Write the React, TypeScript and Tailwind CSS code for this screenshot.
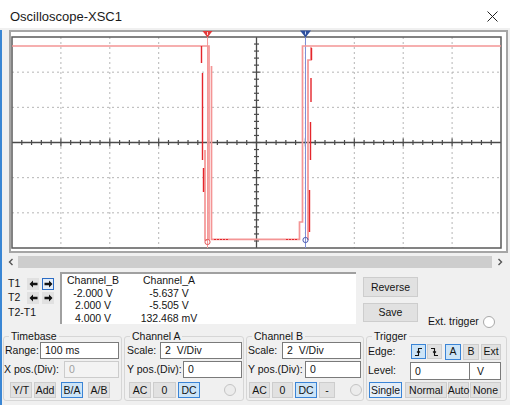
import type { ReactNode } from "react";

const GX0 = 12;
const GY0 = 37;
const GW = 489;
const GH = 211;
const DX = GW / 10;
const DY = GH / 6;
const CX = GX0 + 5 * DX;
const CY = GY0 + 3 * DY;

function Screen() {
  const vLines = [1, 2, 3, 4, 6, 7, 8, 9].map((i) => GX0 + i * DX);
  const hLines = [1, 2, 4, 5].map((j) => GY0 + j * DY);
  const vTicks = Array.from({ length: 29 }, (_, k) => k + 1);
  const hTicks = Array.from({ length: 49 }, (_, k) => k + 1);

  return (
    <svg width={499} height={223} viewBox="9 30 499 223" className="block">
      <rect x={10} y={31} width={497} height={221} fill="#fff" stroke="#a5a5a5" strokeWidth={2} />

      {/* grid */}
      {vLines.map((x) => (
        <line key={`v${x}`} x1={x} y1={GY0} x2={x} y2={GY0 + GH} stroke="#b5b5b5" strokeWidth={1} strokeDasharray="2 3" />
      ))}
      {hLines.map((y) => (
        <line key={`h${y}`} x1={GX0} y1={y} x2={GX0 + GW} y2={y} stroke="#b5b5b5" strokeWidth={1} strokeDasharray="2 3" />
      ))}
      <line x1={CX} y1={GY0} x2={CX} y2={GY0 + GH} stroke="#4a4a4a" strokeWidth={1.3} />
      <line x1={GX0} y1={CY} x2={GX0 + GW} y2={CY} stroke="#4a4a4a" strokeWidth={1.3} />
      {vTicks.map((k) => {
        const y = GY0 + (k * DY) / 5;
        const l = k % 5 === 0 ? 4 : 2.5;
        return <line key={`vt${k}`} x1={CX - l} y1={y} x2={CX + l} y2={y} stroke="#4a4a4a" strokeWidth={1.2} />;
      })}
      {hTicks.map((k) => {
        const x = GX0 + (k * DX) / 5;
        const l = k % 5 === 0 ? 4 : 2.5;
        return <line key={`ht${k}`} x1={x} y1={CY - l} x2={x} y2={CY + l} stroke="#4a4a4a" strokeWidth={1.2} />;
      })}
      <rect x={GX0} y={GY0} width={GW} height={GH} fill="none" stroke="#5a5a5a" strokeWidth={1.5} />

      {/* cursors */}
      <line x1={207.5} y1={GY0} x2={207.5} y2={GY0 + GH} stroke="#f29a9a" strokeWidth={1} />
      <line x1={305.5} y1={GY0} x2={305.5} y2={GY0 + GH} stroke="#7f8fd6" strokeWidth={1} />

      {/* traces */}
      <g fill="none" stroke="#f49595" strokeWidth={1.7}>
        <path d="M12 46 H209 V240" />
        <path d="M205 150 V240 H208" />
        <path d="M211.5 66 V239.3 H299.5 V222 H302.5 V46 H501" />
        <path d="M308 240 V60 H311 V47" />
      </g>
      <g fill="none" stroke="#e4262c" strokeWidth={1.4}>
        <path d="M201.5 46 V63 M202.5 73 V160 M203.5 168 V192" />
        <path d="M311.5 48 V60 M311 78 V102 M310.5 122 V160 M309.5 190 V232" />
        <path d="M214 239.5 H228 M286 239.5 H298" strokeWidth={1} strokeDasharray="2 1" />
      </g>

      {/* cursor markers */}
      <polygon points="202.5,31 212.5,31 207.5,37.5" fill="#e23a3a" />
      <line x1={207.5} y1={32} x2={207.5} y2={35} stroke="#ffd0d0" strokeWidth={1} />
      <polygon points="300,30.5 311,30.5 305.5,37.5" fill="#2d4f9e" />
      <line x1={305.5} y1={31.5} x2={305.5} y2={34.5} stroke="#c9d4f2" strokeWidth={1} />
      <circle cx={207.5} cy={242} r={2.6} fill="none" stroke="#e25a5a" strokeWidth={1} />
      <circle cx={305.5} cy={240} r={2.6} fill="none" stroke="#4b5cb2" strokeWidth={1} />
    </svg>
  );
}

function Chevron({ dir }: { dir: "l" | "r" }) {
  return (
    <svg width={6} height={8} viewBox="0 0 6 8">
      <path d={dir === "l" ? "M4.5 1 L1.5 4 L4.5 7" : "M1.5 1 L4.5 4 L1.5 7"} fill="none" stroke="#555" strokeWidth={1.4} />
    </svg>
  );
}

function Arrow({ dir }: { dir: "l" | "r" }) {
  return (
    <svg width={9} height={8} viewBox="0 0 9 8">
      <path
        d={dir === "l" ? "M0.5 4 L4 0.5 V2.8 H8.5 V5.2 H4 V7.5 Z" : "M8.5 4 L5 0.5 V2.8 H0.5 V5.2 H5 V7.5 Z"}
        fill="#111"
      />
    </svg>
  );
}

function Edge({ rising }: { rising: boolean }) {
  return (
    <svg width={9} height={10} viewBox="0 0 9 10">
      <path d={rising ? "M1 8.5 H4.5 V1.5 H8" : "M1 1.5 H4.5 V8.5 H8"} fill="none" stroke="#111" strokeWidth={1.1} />
      <path d={rising ? "M3 5.5 L4.5 4 L6 5.5" : "M3 4.5 L4.5 6 L6 4.5"} fill="none" stroke="#111" strokeWidth={1.1} />
    </svg>
  );
}

function Btn({ children, className, sel }: { children: ReactNode; className: string; sel?: boolean }) {
  return (
    <div
      className={`h-full flex items-center justify-center border leading-none ${
        sel ? "bg-[#cce4f7] border-[#3a84d6]" : "bg-[#e1e1e1] border-[#cdcdcd]"
      } ${className}`}
    >
      {children}
    </div>
  );
}

function Field({ children, className, disabled }: { children: ReactNode; className: string; disabled?: boolean }) {
  return (
    <div
      className={`h-full flex items-center pl-[4px] border leading-none ${
        disabled ? "bg-[#f3f3f3] border-[#cccccc] text-[#a0a0a0]" : "bg-white border-[#7a7a7a]"
      } ${className}`}
    >
      {children}
    </div>
  );
}

function Radio({ className }: { className: string }) {
  return <div className={`w-[12px] h-[12px] rounded-full border border-[#c4c4c4] bg-[#ececec] ${className}`} />;
}

function Group({ title, className, children }: { title: string; className: string; children: ReactNode }) {
  return (
    <fieldset className={`border border-[#d6d6d6] rounded-[3px] pb-[2px] ${className}`}>
      <legend className="ml-[5px] px-[2px] leading-[12px]">{title}</legend>
      {children}
    </fieldset>
  );
}

export default function App() {
  return (
    <div className="w-[510px] h-[405px] overflow-hidden bg-[#f0f0f0] font-['Liberation_Sans',Arial,sans-serif] text-[10.5px] text-[#141414]">
      {/* title bar */}
      <div className="h-[28px] bg-white flex items-center justify-between pt-[5px] pl-[10px] pr-[12px]">
        <span className="text-[13px] text-[#1a1a1a]">Oscilloscope-XSC1</span>
        <svg width={11} height={11} viewBox="0 0 11 11">
          <path d="M0.5 0.5 L10.5 10.5 M10.5 0.5 L0.5 10.5" stroke="#222" strokeWidth={1} />
        </svg>
      </div>

      <div className="h-[377px] border-l-2 border-b-2 border-[#3a86d4]">
        <div className="ml-[7px] mt-[2px] w-[499px] h-[223px]">
          <Screen />
        </div>

        {/* scrollbar */}
        <div className="ml-[1px] mt-[3px] w-[504px] h-[12px] flex">
          <div className="w-[15px] flex items-center justify-center">
            <Chevron dir="l" />
          </div>
          <div className="w-[474px] h-full bg-[#cdcdcd]" />
          <div className="w-[15px] flex items-center justify-center">
            <Chevron dir="r" />
          </div>
        </div>

        {/* measurements */}
        <div className="mt-[4px] h-[56px] flex pl-[3px]">
          <div className="pl-[3px] pt-[6px]">
            <div className="h-[12px] flex items-center">
              <span className="w-[19px]">T1</span>
              <div className="w-[12px] h-[12px] flex items-center justify-center bg-[#e1e1e1]">
                <Arrow dir="l" />
              </div>
              <div className="ml-[3px] w-[12px] h-[12px] flex items-center justify-center bg-[#e6eef8] border border-[#2c6cc4]">
                <Arrow dir="r" />
              </div>
            </div>
            <div className="mt-[2px] h-[12px] flex items-center">
              <span className="w-[19px]">T2</span>
              <div className="w-[12px] h-[12px] flex items-center justify-center bg-[#e1e1e1]">
                <Arrow dir="l" />
              </div>
              <div className="ml-[3px] w-[12px] h-[12px] flex items-center justify-center bg-[#e1e1e1]">
                <Arrow dir="r" />
              </div>
            </div>
            <div className="mt-[3px] h-[12px] flex items-center">T2-T1</div>
          </div>

          <div className="ml-[6px] w-[296px] h-[52px] bg-white border-t-2 border-l-2 border-[#a0a0a0] flex leading-[12.6px]">
            <div className="ml-[1px] w-[60px] flex flex-col items-center">
              <span>Channel_B</span>
              <span>-2.000 V</span>
              <span>2.000 V</span>
              <span>4.000 V</span>
            </div>
            <div className="ml-[16px] w-[60px] flex flex-col items-center">
              <span>Channel_A</span>
              <span>-5.637 V</span>
              <span>-5.505 V</span>
              <span className="whitespace-nowrap">132.468 mV</span>
            </div>
          </div>

          <div className="ml-[7px] w-[55px] flex flex-col">
            <Btn className="mt-[5px] !h-[20px] w-[55px]">Reverse</Btn>
            <Btn className="mt-[6px] !h-[19px] w-[55px]">Save</Btn>
          </div>

          <div className="ml-[10px] mt-[44px] h-[12px] flex items-center">
            <span>Ext. trigger</span>
            <div className="ml-[4px] w-[12px] h-[12px] rounded-full border border-[#a8a8a8] bg-white" />
          </div>
        </div>

        {/* control groups */}
        <div className="mt-[2px] flex pl-[1px] gap-[2px]">
          <Group title="Timebase" className="w-[119px]">
            <div className="h-[17px] flex items-center">
              <span className="w-[36px] pl-[1px]">Range:</span>
              <Field className="w-[79px]">100 ms</Field>
            </div>
            <div className="mt-[2px] h-[17px] flex items-center">
              <span className="w-[60px] whitespace-nowrap">X pos.(Div):</span>
              <Field className="w-[55px]" disabled>
                0
              </Field>
            </div>
            <div className="mt-[4px] h-[16px] flex items-center">
              <Btn className="ml-[6px] w-[22px]">Y/T</Btn>
              <Btn className="ml-[2px] w-[22px]">Add</Btn>
              <Btn className="ml-[5px] w-[22px]" sel>
                B/A
              </Btn>
              <Btn className="ml-[5px] w-[22px]">A/B</Btn>
            </div>
          </Group>

          <Group title="Channel A" className="w-[120px]">
            <div className="h-[17px] flex items-center">
              <span className="w-[35px] pl-[2px]">Scale:</span>
              <Field className="w-[82px]">2&nbsp;&nbsp;V/Div</Field>
            </div>
            <div className="mt-[2px] h-[17px] flex items-center">
              <span className="w-[58px] pl-[2px] whitespace-nowrap">Y pos.(Div):</span>
              <Field className="w-[59px]">0</Field>
            </div>
            <div className="mt-[4px] h-[16px] flex items-center">
              <Btn className="ml-[4px] w-[22px]">AC</Btn>
              <Btn className="ml-[2px] w-[23px]">0</Btn>
              <Btn className="ml-[2px] w-[22px]" sel>
                DC
              </Btn>
              <Radio className="ml-[24px]" />
            </div>
          </Group>

          <Group title="Channel B" className="w-[118px]">
            <div className="h-[17px] flex items-center">
              <span className="w-[35px] pl-[1px]">Scale:</span>
              <Field className="w-[79px]">2&nbsp;&nbsp;V/Div</Field>
            </div>
            <div className="mt-[2px] h-[17px] flex items-center">
              <span className="w-[58px] pl-[1px] whitespace-nowrap">Y pos.(Div):</span>
              <Field className="w-[56px]">0</Field>
            </div>
            <div className="mt-[4px] h-[16px] flex items-center">
              <Btn className="ml-[2px] w-[21px]">AC</Btn>
              <Btn className="ml-[2px] w-[21px]">0</Btn>
              <Btn className="ml-[2px] w-[22px]" sel>
                DC
              </Btn>
              <Btn className="ml-[2px] w-[16px]">-</Btn>
              <Radio className="ml-[15px]" />
            </div>
          </Group>

          <Group title="Trigger" className="w-[141px]">
            <div className="mt-[1px] h-[17px] flex items-center">
              <span className="w-[44px] pl-[1px]">Edge:</span>
              <Btn className="w-[15px] !h-[15px]" sel>
                <Edge rising />
              </Btn>
              <Btn className="ml-[1px] w-[15px] !h-[15px]">
                <Edge rising={false} />
              </Btn>
              <Btn className="ml-[3px] w-[16px] !h-[16px]" sel>
                A
              </Btn>
              <Btn className="ml-[2px] w-[16px] !h-[16px]">B</Btn>
              <Btn className="ml-[2px] w-[20px] !h-[16px]">Ext</Btn>
            </div>
            <div className="mt-[2px] h-[18px] flex items-center">
              <span className="w-[43px] pl-[1px]">Level:</span>
              <Field className="w-[60px]">0</Field>
              <Field className="w-[31px] pl-[7px] border-l-0">V</Field>
            </div>
            <div className="mt-[2px] h-[16px] flex items-center">
              <Btn className="ml-[2px] w-[33px] !border-[#3a84d6] !bg-[#e5eef8]">Single</Btn>
              <Btn className="ml-[3px] w-[42px]">Normal</Btn>
              <Btn className="ml-[1px] w-[21px]">Auto</Btn>
              <Btn className="ml-[1px] w-[31px]">None</Btn>
            </div>
          </Group>
        </div>
      </div>
    </div>
  );
}
